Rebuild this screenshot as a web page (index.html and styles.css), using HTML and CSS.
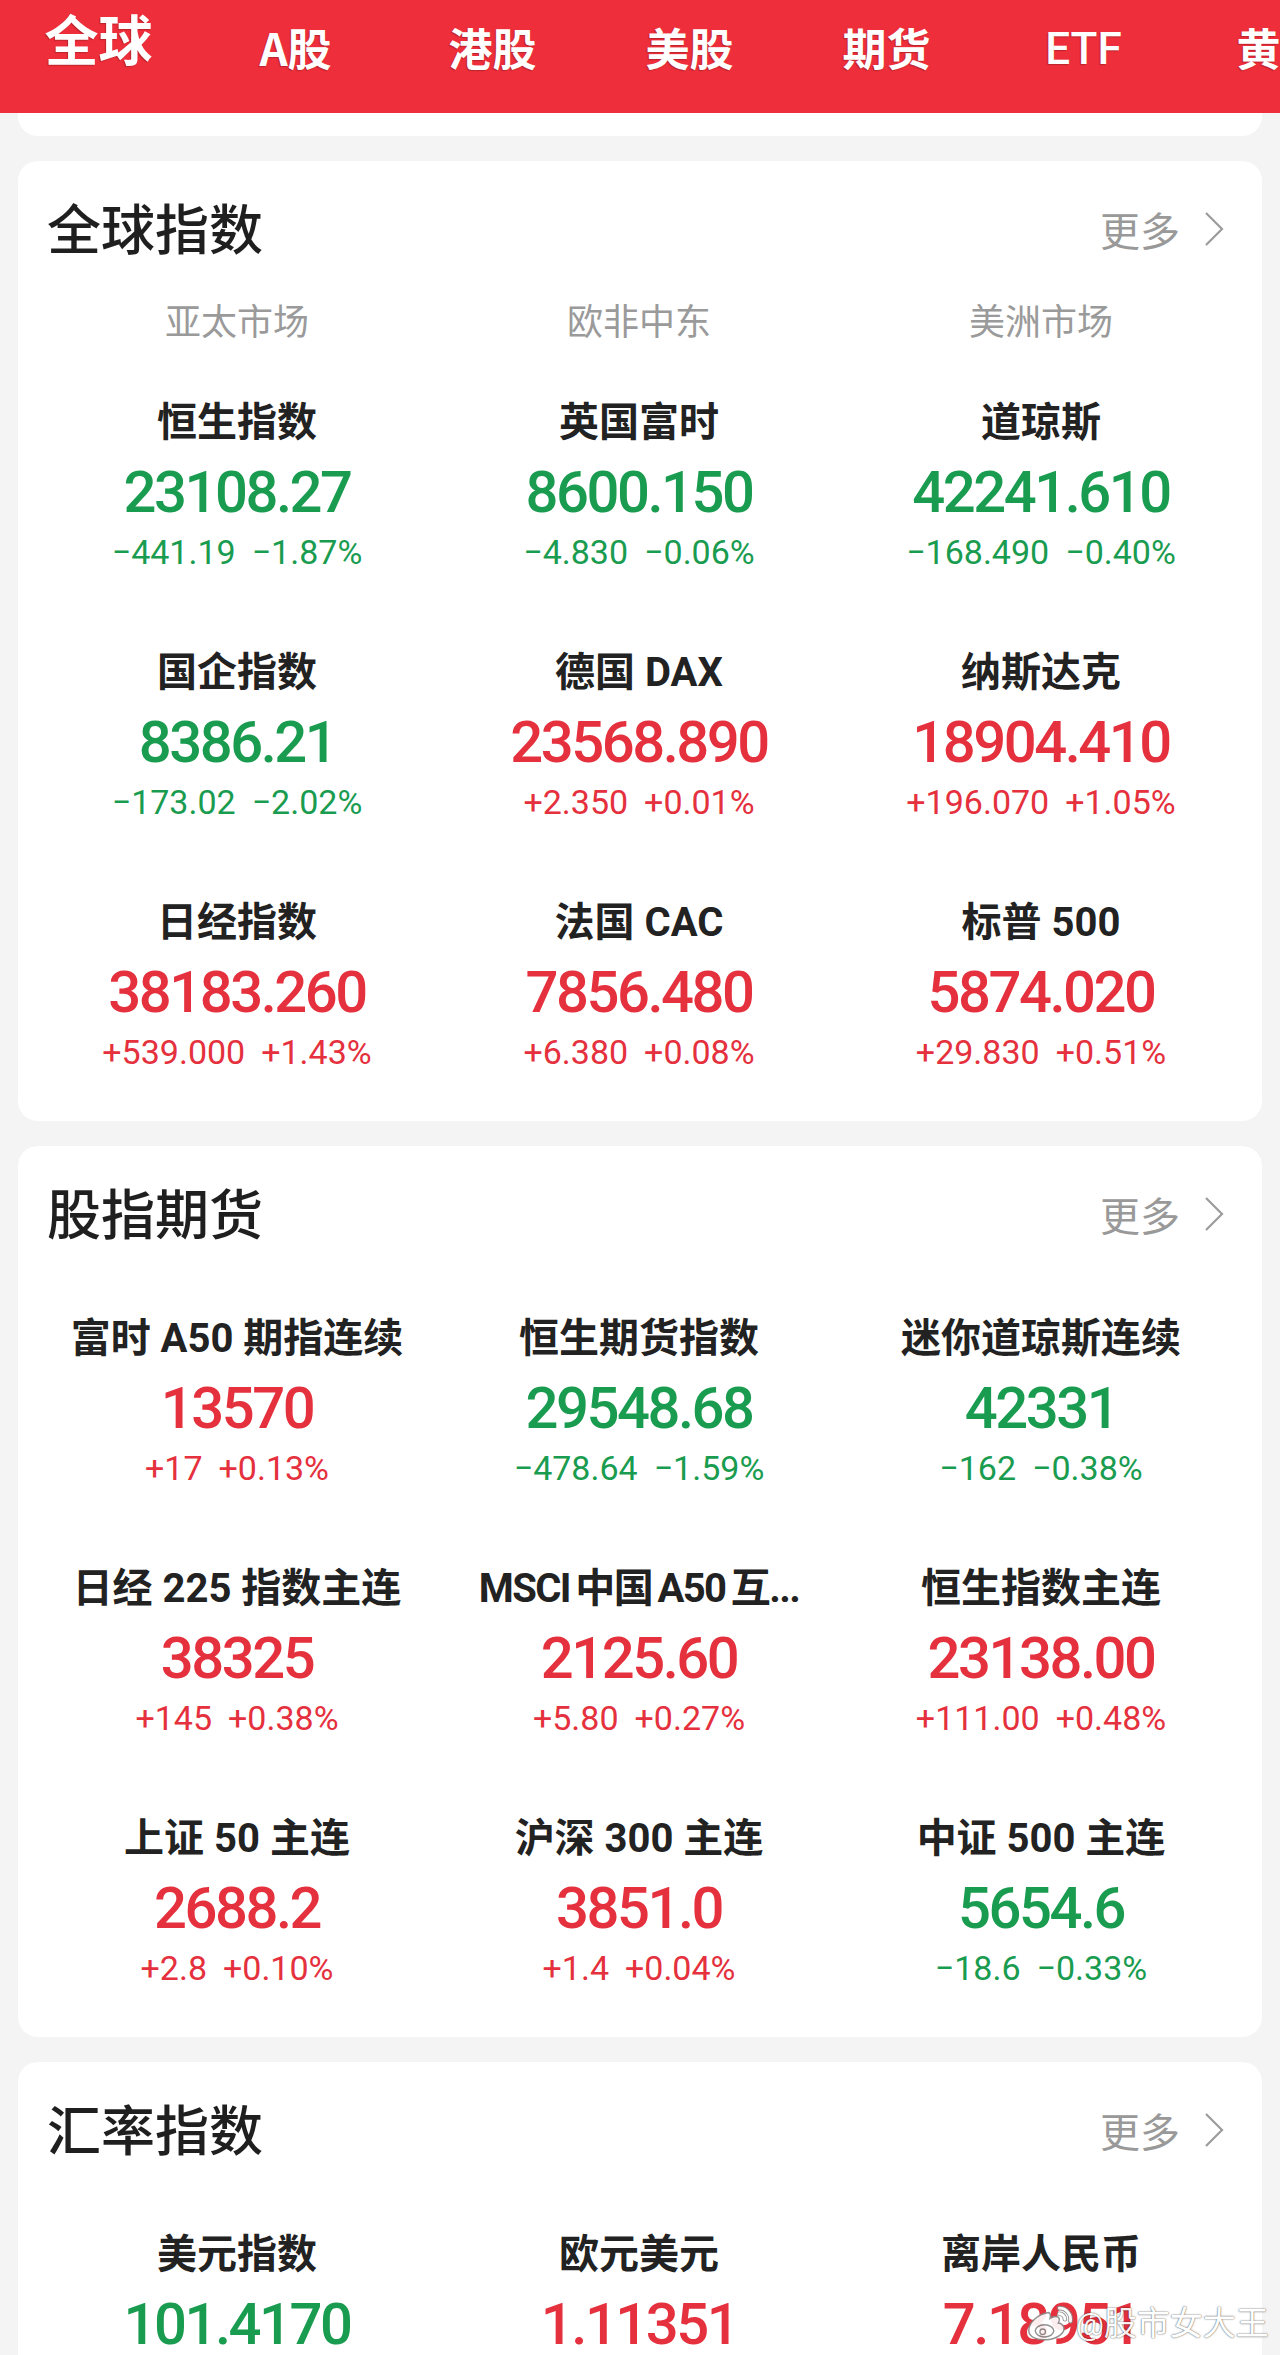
FILE: index.html
```html
<!DOCTYPE html>
<html lang="zh-CN">
<head>
<meta charset="utf-8">
<title>全球行情</title>
<link rel="stylesheet" href="styles.css">
</head>
<body>
<header class="topbar">
  <nav class="tabs">
    <span class="tab active">全球</span>
    <span class="tab">A股</span>
    <span class="tab">港股</span>
    <span class="tab">美股</span>
    <span class="tab">期货</span>
    <span class="tab tab-latin">ETF</span>
    <span class="tab">黄金</span>
  </nav>
</header>

<main class="page">
  <div class="card card-stub"></div>

  <section class="card">
    <div class="card-head">
      <h2 class="card-title">全球指数</h2>
      <a class="more">更多<svg class="chev" width="20" height="36" viewBox="0 0 20 36"><path d="M2 2 L18 18 L2 34" fill="none" stroke="#9c9c9c" stroke-width="2.2"/></svg></a>
    </div>
    <div class="grid regions">
      <div class="region">亚太市场</div>
      <div class="region">欧非中东</div>
      <div class="region">美洲市场</div>
    </div>
    <div class="grid quotes quotes-after-regions">
      <div class="q down"><div class="name">恒生指数</div><div class="val">23108.27</div><div class="chg"><span>−441.19</span><span>−1.87%</span></div></div>
      <div class="q down"><div class="name">英国富时</div><div class="val">8600.150</div><div class="chg"><span>−4.830</span><span>−0.06%</span></div></div>
      <div class="q down"><div class="name">道琼斯</div><div class="val">42241.610</div><div class="chg"><span>−168.490</span><span>−0.40%</span></div></div>
      <div class="q down"><div class="name">国企指数</div><div class="val">8386.21</div><div class="chg"><span>−173.02</span><span>−2.02%</span></div></div>
      <div class="q up"><div class="name">德国 DAX</div><div class="val">23568.890</div><div class="chg"><span>+2.350</span><span>+0.01%</span></div></div>
      <div class="q up"><div class="name">纳斯达克</div><div class="val">18904.410</div><div class="chg"><span>+196.070</span><span>+1.05%</span></div></div>
      <div class="q up"><div class="name">日经指数</div><div class="val">38183.260</div><div class="chg"><span>+539.000</span><span>+1.43%</span></div></div>
      <div class="q up"><div class="name">法国 CAC</div><div class="val">7856.480</div><div class="chg"><span>+6.380</span><span>+0.08%</span></div></div>
      <div class="q up"><div class="name">标普 500</div><div class="val">5874.020</div><div class="chg"><span>+29.830</span><span>+0.51%</span></div></div>
    </div>
  </section>

  <section class="card">
    <div class="card-head">
      <h2 class="card-title">股指期货</h2>
      <a class="more">更多<svg class="chev" width="20" height="36" viewBox="0 0 20 36"><path d="M2 2 L18 18 L2 34" fill="none" stroke="#9c9c9c" stroke-width="2.2"/></svg></a>
    </div>
    <div class="grid quotes">
      <div class="q up"><div class="name">富时 A50 期指连续</div><div class="val">13570</div><div class="chg"><span>+17</span><span>+0.13%</span></div></div>
      <div class="q down"><div class="name">恒生期货指数</div><div class="val">29548.68</div><div class="chg"><span>−478.64</span><span>−1.59%</span></div></div>
      <div class="q down"><div class="name">迷你道琼斯连续</div><div class="val">42331</div><div class="chg"><span>−162</span><span>−0.38%</span></div></div>
      <div class="q up"><div class="name">日经 225 指数主连</div><div class="val">38325</div><div class="chg"><span>+145</span><span>+0.38%</span></div></div>
      <div class="q up"><div class="name name-tight">MSCI 中国 A50 互...</div><div class="val">2125.60</div><div class="chg"><span>+5.80</span><span>+0.27%</span></div></div>
      <div class="q up"><div class="name">恒生指数主连</div><div class="val">23138.00</div><div class="chg"><span>+111.00</span><span>+0.48%</span></div></div>
      <div class="q up"><div class="name">上证 50 主连</div><div class="val">2688.2</div><div class="chg"><span>+2.8</span><span>+0.10%</span></div></div>
      <div class="q up"><div class="name">沪深 300 主连</div><div class="val">3851.0</div><div class="chg"><span>+1.4</span><span>+0.04%</span></div></div>
      <div class="q down"><div class="name">中证 500 主连</div><div class="val">5654.6</div><div class="chg"><span>−18.6</span><span>−0.33%</span></div></div>
    </div>
  </section>

  <section class="card">
    <div class="card-head">
      <h2 class="card-title">汇率指数</h2>
      <a class="more">更多<svg class="chev" width="20" height="36" viewBox="0 0 20 36"><path d="M2 2 L18 18 L2 34" fill="none" stroke="#9c9c9c" stroke-width="2.2"/></svg></a>
    </div>
    <div class="grid quotes">
      <div class="q down"><div class="name">美元指数</div><div class="val">101.4170</div><div class="chg"><span>−0.3310</span><span>−0.33%</span></div></div>
      <div class="q up"><div class="name">欧元美元</div><div class="val">1.11351</div><div class="chg"><span>+0.00312</span><span>+0.28%</span></div></div>
      <div class="q up"><div class="name">离岸人民币</div><div class="val">7.18951</div><div class="chg"><span>+0.00270</span><span>+0.04%</span></div></div>
    </div>
  </section>
</main>

<div class="watermark">
  <svg class="wb-logo" width="50" height="40" viewBox="0 0 54 40">
    <path d="M23 9 C12 11 3 20 3 28 C3 35 12 39 23 38 C34 37 42 31 41 25 C40 21 36 20 35 20 C37 16 36 13 32 13 C29 13 26 15 26 15 C27 11 26 8 23 9 Z" fill="#fff" stroke="#8a8a8a" stroke-width="1.6"/>
    <ellipse cx="20" cy="28.5" rx="10" ry="6.5" fill="#fff" stroke="#8a8a8a" stroke-width="1.6"/>
    <circle cx="18" cy="29.5" r="3" fill="#fff" stroke="#8a8a8a" stroke-width="1.4"/>
    <path d="M36 4 A12 12 0 0 1 48 18" fill="none" stroke="#8a8a8a" stroke-width="5" stroke-linecap="round"/>
    <path d="M36 4 A12 12 0 0 1 48 18" fill="none" stroke="#fff" stroke-width="3" stroke-linecap="round"/>
    <path d="M36 10 A6 6 0 0 1 42 16" fill="none" stroke="#8a8a8a" stroke-width="5" stroke-linecap="round"/>
    <path d="M36 10 A6 6 0 0 1 42 16" fill="none" stroke="#fff" stroke-width="3" stroke-linecap="round"/>
  </svg>
  <span class="wb-text"><span class="wb-at">@</span>股市女大王</span>
</div>
</body>
</html>
```

FILE: styles.css
```css
* { box-sizing: border-box; }

html, body {
  margin: 0;
  padding: 0;
}

body {
  width: 1280px;
  min-height: 2355px;
  background: #f4f4f4;
  font-family: "Noto Sans CJK SC", "Noto Sans", sans-serif;
  color: #222;
  position: relative;
  overflow: hidden;
}

/* top navigation */
.topbar {
  height: 113px;
  background: #ee2e3a;
  overflow: hidden;
}

.tabs {
  display: flex;
  align-items: flex-start;
  white-space: nowrap;
}

.tab {
  flex: 0 0 197px;
  margin-top: 25px;
  text-align: center;
  color: #fff;
  font-size: 44px;
  font-weight: 700;
  line-height: 1;
  text-shadow: -1px 1px 1px rgba(90, 20, 20, 0.35);
}

.tab-latin {
  margin-top: 27px;
  font-family: Roboto, "Noto Sans CJK SC", sans-serif;
  font-weight: 500;
}

.tab.active {
  margin-top: 11px;
  font-size: 54px;
  font-weight: 700;
}

/* page */
.page {
  padding: 0 18px;
}

.card {
  background: #fff;
  border-radius: 20px;
  margin-top: 25px;
  padding: 34px 20px 49px 18px;
}

.card-stub {
  margin-top: 0;
  height: 23px;
  padding: 0;
  border-radius: 0 0 20px 20px;
}

.card-head {
  display: flex;
  align-items: center;
  justify-content: space-between;
  padding: 0 18px 0 11px;
  height: 64px;
}

.card-title {
  margin: 0;
  font-size: 54px;
  line-height: 64px;
  font-weight: 500;
  color: #1f1f1f;
}

.more {
  display: flex;
  align-items: center;
  color: #999;
  font-size: 40px;
  line-height: 48px;
  margin-top: 4px;
}

.chev {
  margin-left: 24px;
  display: block;
}

.grid {
  display: grid;
  grid-template-columns: repeat(3, 1fr);
}

.regions {
  margin-top: 38px;
}

.region {
  text-align: center;
  font-size: 36px;
  line-height: 44px;
  color: #9a9a9a;
}

.quotes {
  margin-top: 67px;
  row-gap: 73px;
}

.quotes-after-regions {
  margin-top: 54px;
}

.q {
  display: flex;
  flex-direction: column;
  align-items: center;
  text-align: center;
}

.name {
  padding-top: 4px;
  font-family: Roboto, "Noto Sans CJK SC", sans-serif;
  font-size: 40px;
  line-height: 48px;
  font-weight: 700;
  color: #222;
  white-space: nowrap;
}

.name-tight {
  letter-spacing: -1.6px;
  word-spacing: -3px;
}

.val {
  margin-top: 13px;
  font-family: Roboto, "Liberation Sans", sans-serif;
  font-size: 58px;
  line-height: 64px;
  font-weight: 500;
  letter-spacing: -2.5px;
}

.chg {
  margin-top: 8px;
  display: flex;
  gap: 16px;
  font-family: Roboto, "Liberation Sans", sans-serif;
  font-size: 34px;
  line-height: 40px;
}

.up .val, .up .chg { color: #e5303d; }
.down .val, .down .chg { color: #1a9c50; }

/* watermark overlay */
.watermark {
  position: absolute;
  left: 1026px;
  top: 2301px;
  display: flex;
  align-items: center;
  white-space: nowrap;
  pointer-events: none;
}

.wb-logo {
  display: block;
  flex: 0 0 auto;
  opacity: 0.92;
}

.wb-text {
  font-size: 33px;
  line-height: 40px;
  color: #fff;
  opacity: 0.92;
  white-space: nowrap;
  text-shadow: 0 0 2px rgba(0, 0, 0, 0.55), 0 0 1px rgba(0, 0, 0, 0.5);
}

.wb-at {
  font-family: Roboto, sans-serif;
  font-size: 31px;
}
```
